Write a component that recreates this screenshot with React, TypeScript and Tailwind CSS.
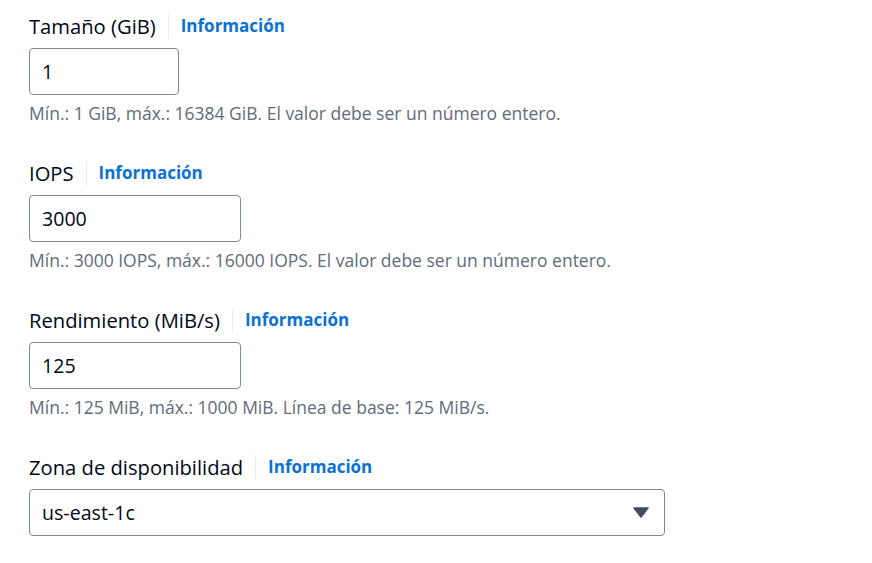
import React from "react";

const font = { fontFamily: '"Open Sans", "Noto Sans", Arial, sans-serif' };

interface FieldProps {
  label: string;
  value: string;
  width: string;
  hint?: string;
  select?: boolean;
}

const Field = ({ label, value, width, hint, select }: FieldProps) => {
  return (
    <div className="flex flex-col">
      {/* Label row */}
      <div className="flex h-[30px] items-center">
        <span className="text-[20.2px] leading-[26px] text-[#000716]">{label}</span>
        <span className="mx-[12px] h-[25px] w-px bg-[#e9ebed]" />
        <a className="text-[17px] font-bold leading-[22px] text-[#0972d3]">Información</a>
      </div>

      {/* Input or select */}
      <div
        className={`mt-[7px] flex h-[47px] items-center justify-between rounded-[4px] border border-[#7d8998] bg-white pl-[12px] pr-[15px] ${width}`}
      >
        <span className="text-[19.6px] leading-[26px] text-[#000716]">{value}</span>
        {select && (
          <svg width="16" height="11" viewBox="0 0 16 11">
            <path d="M1 1 H15 L8 10 Z" fill="#414d5c" stroke="#414d5c" strokeWidth="1.5" strokeLinejoin="round" />
          </svg>
        )}
      </div>

      {hint && (
        <p className="mt-[8px] text-[17.5px] leading-[20px] text-[#5f6b7a]">{hint}</p>
      )}
    </div>
  );
};

export default function App() {
  return (
    <div className="h-[563px] w-[872px] bg-white pl-[29px] pt-[11px]" style={font}>
      <div className="flex flex-col gap-[35px]">
        <Field
          label="Tamaño (GiB)"
          value="1"
          width="w-[150px]"
          hint="Mín.: 1 GiB, máx.: 16384 GiB. El valor debe ser un número entero."
        />
        <Field
          label="IOPS"
          value="3000"
          width="w-[212px]"
          hint="Mín.: 3000 IOPS, máx.: 16000 IOPS. El valor debe ser un número entero."
        />
        <Field
          label="Rendimiento (MiB/s)"
          value="125"
          width="w-[212px]"
          hint="Mín.: 125 MiB, máx.: 1000 MiB. Línea de base: 125 MiB/s."
        />
        <Field label="Zona de disponibilidad" value="us-east-1c" width="w-[636px]" select />
      </div>
    </div>
  );
}
